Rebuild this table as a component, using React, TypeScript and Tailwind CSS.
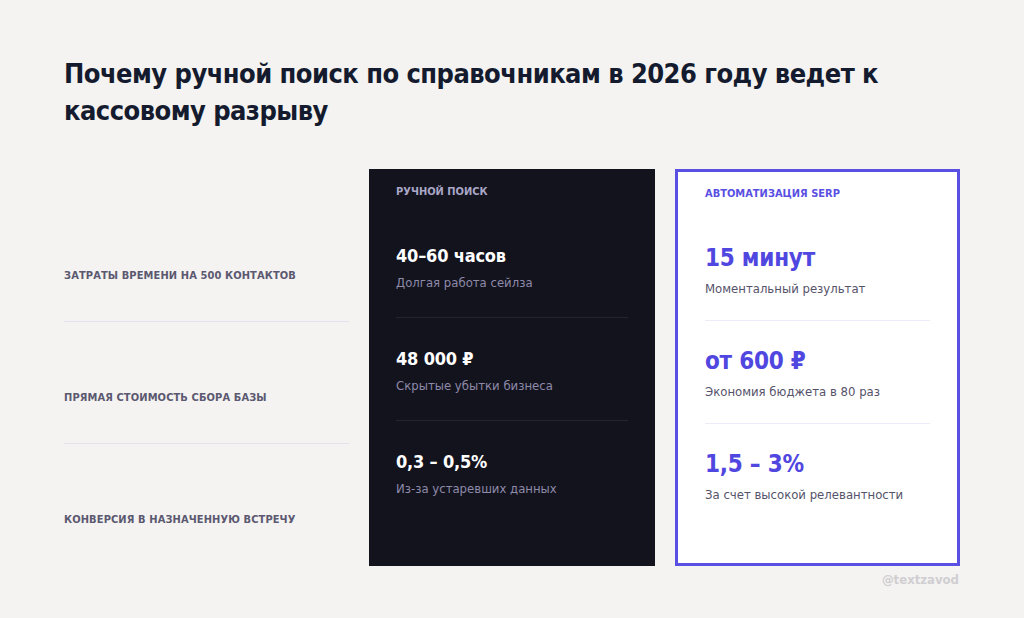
const font = { fontFamily: '"Liberation Sans Narrow", "DejaVu Sans Condensed", "Roboto", sans-serif' };

const labels = [
  "Затраты времени на 500 контактов",
  "Прямая стоимость сбора базы",
  "Конверсия в назначенную встречу",
];

const manual = [
  { value: "40–60 часов", note: "Долгая работа сейлза" },
  { value: "48 000 ₽", note: "Скрытые убытки бизнеса" },
  { value: "0,3 – 0,5%", note: "Из-за устаревших данных" },
];

const auto = [
  { value: "15 минут", note: "Моментальный результат" },
  { value: "от 600 ₽", note: "Экономия бюджета в 80 раз" },
  { value: "1,5 – 3%", note: "За счет высокой релевантности" },
];

export default function App() {
  return (
    <div className="h-[618px] w-[1024px] overflow-hidden bg-[#f4f3f1] pl-16 pt-[55px]" style={font}>
      <h1 className="w-[860px] text-[27px] font-bold leading-[37px] tracking-[-0.02em] text-[#151b2e]">
        Почему ручной поиск по справочникам в 2026 году ведет к кассовому разрыву
      </h1>

      <div className="mt-[40px] grid w-[895px] grid-cols-[285px_286px_285px] gap-x-[20px]">
        {/* row labels */}
        <div className="flex flex-col pt-[31px]">
          {labels.map((l, i) => (
            <div
              key={l}
              className={`h-[122px] pt-[62px] ${i < 2 ? "border-b border-[#e3e1ee]" : ""}`}
            >
              <span className="text-[11px] font-bold uppercase leading-4 tracking-[0.01em] text-[#5b5870]">
                {l}
              </span>
            </div>
          ))}
        </div>

        {/* manual search */}
        <div className="h-[397px] bg-[#13131e] px-[27px] pt-[15px]">
          <div className="text-[11px] font-bold uppercase leading-4 text-[#a9a6c6]">Ручной поиск</div>
          <div className="mt-[44px]">
            {manual.map((m, i) => (
              <div key={m.value} className={i < 2 ? "mb-[29px] border-b border-[#24242f] pb-[25px]" : ""}>
                <div className="text-[18px] font-bold leading-6 tracking-[-0.01em] text-white">{m.value}</div>
                <div className="mt-[6px] text-[13px] leading-[18px] text-[#8e8aa8]">{m.note}</div>
              </div>
            ))}
          </div>
        </div>

        {/* automation */}
        <div className="h-[397px] border-[3px] border-[#5a4fe3] bg-white px-[27px] pt-[14px]">
          <div className="text-[11px] font-bold uppercase leading-4 text-[#5a4fe3]">Автоматизация SERP</div>
          <div className="mt-[41px]">
            {auto.map((m, i) => (
              <div key={m.value} className={i < 2 ? "mb-[25px] border-b border-[#ecebf7] pb-[22px]" : ""}>
                <div className="text-[24px] font-bold leading-[30px] tracking-[-0.01em] text-[#5046e0]">{m.value}</div>
                <div className="mt-[7px] text-[13px] leading-[18px] text-[#55536a]">{m.note}</div>
              </div>
            ))}
          </div>
        </div>
      </div>

      <div className="mt-[4px] w-[895px] text-right text-[13px] font-bold leading-5 text-[#d0ced2]">@textzavod</div>
    </div>
  );
}
